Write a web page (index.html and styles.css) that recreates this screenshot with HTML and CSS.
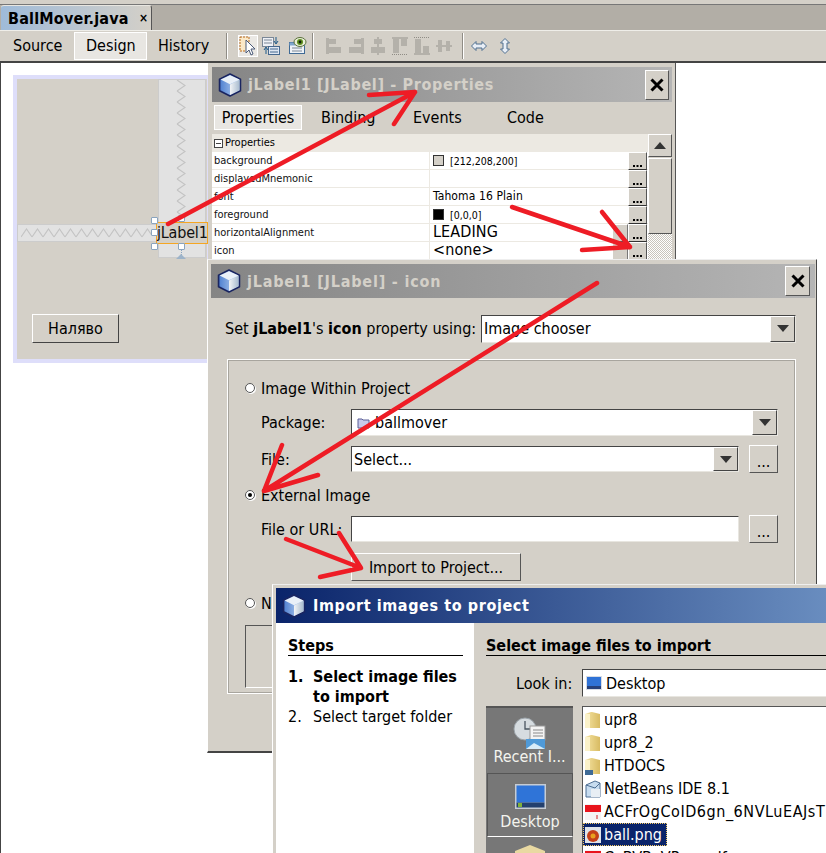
FILE: index.html
```html
<!DOCTYPE html>
<html lang="en">
<head>
<meta charset="utf-8">
<title>BallMover.java</title>
<link rel="stylesheet" href="styles.css">
</head>
<body>
<svg class="defs" width="0" height="0" aria-hidden="true">
  <defs>
    <linearGradient id="cubeL" x1="0" y1="0" x2="1" y2="0"><stop offset="0" stop-color="#4d7fd0"/><stop offset="1" stop-color="#c9dcf4"/></linearGradient>
    <linearGradient id="cubeR" x1="0" y1="0" x2="1" y2="0"><stop offset="0" stop-color="#f2f4f6"/><stop offset="1" stop-color="#a9bccf"/></linearGradient>
    <linearGradient id="fold" x1="0" y1="0" x2="1" y2="0"><stop offset="0" stop-color="#f6e4a4"/><stop offset="1" stop-color="#d8bb62"/></linearGradient>
    <pattern id="zigV" width="10" height="11" patternUnits="userSpaceOnUse"><path d="M1 0 9 5.500 1 11" fill="none" stroke="#c4c4c4" stroke-width="1.200"/></pattern>
    <pattern id="zigH" width="11" height="10" patternUnits="userSpaceOnUse"><path d="M0 9 5.500 1 11 9" fill="none" stroke="#c4c4c4" stroke-width="1.200"/></pattern>
    <symbol id="cube" viewBox="1 .5 22 23">
      <path d="M12 1.500 22 6.500V17.500L12 22.500 2 17.500V6.500Z" fill="url(#cubeL)" stroke="#1a2560" stroke-width="1.600" stroke-linejoin="round"/>
      <path d="M12 11.500 21 7V17L12 21.500Z" fill="url(#cubeR)"/>
      <path d="M12 2.600 21 6.800 12 11.300 3 6.800Z" fill="#e9f0f8"/>
    </symbol>
    <symbol id="folder" viewBox="0 0 16 18">
      <path d="M0 3 6 1h1l8 2v14H0Z" fill="url(#fold)"/>
      <path d="M0 3h5v14H0Z" fill="#fbf2c9"/>
    </symbol>
    <symbol id="more" viewBox="0 0 9 2">
      <path d="M0 0h2v2H0zM3.500 0h2v2h-2zM7 0h2v2H7z" fill="#000"/>
    </symbol>
    <symbol id="caret" viewBox="0 0 12 7">
      <path d="M0 0h12L6 7Z" fill="#333"/>
    </symbol>
    <symbol id="caretUp" viewBox="0 0 12 7">
      <path d="M0 7h12L6 0Z" fill="#333"/>
    </symbol>
    <symbol id="closeX" viewBox="0 0 14 14">
      <path d="M1.500 1.500 12.500 12.500M12.500 1.500 1.500 12.500" fill="none" stroke="#000" stroke-width="3"/>
    </symbol>
  </defs>
</svg>

<main class="ide">
  <div class="top-strip"></div>
  <div class="tabbar">
    <div class="file-tab"><span class="file-name">BallMover.java</span><span class="file-close">×</span></div>
  </div>
  <div class="toolbar">
    <span class="view-tab view-tab-first">Source</span>
    <span class="view-tab view-tab-on">Design</span>
    <span class="view-tab">History</span>
    <span class="tool-sep sep-a"></span>
    <span class="tool tool-on">
      <svg width="18" height="20" viewBox="0 0 18 20"><rect x="1" y="1" width="9" height="14" fill="#fbe9c8" stroke="#b86a1c" stroke-dasharray="2 1"/><path d="M7 4v13l3-3 2 5 2-1-2-5h4Z" fill="#fff" stroke="#4a5a78"/></svg>
    </span>
    <span class="tool">
      <svg width="18" height="20" viewBox="0 0 18 20"><rect x="0.500" y="1.500" width="11" height="9" fill="#eef1f6" stroke="#7a8796"/><path d="M2 4h8M2 7h8" stroke="#7a8796"/><rect x="6.500" y="10.500" width="11" height="8" fill="#dfe7f2" stroke="#45688e"/><path d="M8 13h8M8 16h8" stroke="#45688e"/><path d="M14 1v6M12 5l2 3 2-3" stroke="#1f5a8a" fill="none"/><path d="M4 12v6M2 14l2-3 2 3" stroke="#1f5a8a" fill="none"/></svg>
    </span>
    <span class="tool tool-eye">
      <svg width="18" height="20" viewBox="0 0 18 20"><rect x="0.500" y="6.500" width="15" height="11" fill="#eef2f7" stroke="#3f6a95"/><path d="M0.500 6.500h15v3H.5z" fill="#7fa6cc"/><path d="M3 12h10M3 15h10" stroke="#7a8796"/><ellipse cx="11" cy="6" rx="6" ry="4.500" fill="#e9efd8" stroke="#59703a"/><circle cx="11" cy="6" r="3" fill="#5e8f1e"/><circle cx="11" cy="6" r="1.400" fill="#12200a"/></svg>
    </span>
    <span class="tool-sep sep-b"></span>
    <svg class="align" width="16" height="20" viewBox="0 0 16 20"><path d="M0 2h3v16H0zM3 3h7v5H3zM3 11h12v6H3z" fill="#b4b1aa"/></svg>
    <svg class="align" width="16" height="20" viewBox="0 0 16 20"><path d="M13 2h3v16h-3zM6 3h7v5H6zM1 11h12v6H1z" fill="#b4b1aa"/></svg>
    <svg class="align" width="16" height="20" viewBox="0 0 16 20"><path d="M7 1h2v18H7zM4 3h8v5H4zM1 11h14v6H1z" fill="#b4b1aa"/></svg>
    <svg class="align" width="16" height="20" viewBox="0 0 16 20"><path d="M0 1h16v2H0zM1 3h6v14H1zM9 3h6v7H9z" fill="#b4b1aa"/><path d="M0 18.500h16" stroke="#8f8c85" stroke-dasharray="1 1"/></svg>
    <svg class="align" width="16" height="20" viewBox="0 0 16 20"><path d="M0 17h16v2H0zM1 3h6v14H1zM9 10h6v7H9z" fill="#b4b1aa"/><path d="M0 1.500h16" stroke="#8f8c85" stroke-dasharray="1 1"/></svg>
    <svg class="align" width="16" height="20" viewBox="0 0 16 20"><path d="M0 9h16v2H0zM2 4h4v12H2zM10 5h4v10h-4z" fill="#b4b1aa"/></svg>
    <span class="tool-sep sep-c"></span>
    <svg class="resize" width="16" height="12" viewBox="0 0 16 12"><path d="M.5 6 5 1.500V4h6V1.500L15.500 6 11 10.500V8H5v2.500Z" fill="#e8eef6" stroke="#4f6f8f"/></svg>
    <svg class="resize resize-v" width="12" height="16" viewBox="0 0 12 16"><path d="M6 .5 10.500 5H8v6h2.500L6 15.500 1.500 11H4V5H1.500Z" fill="#e8eef6" stroke="#4f6f8f"/></svg>
  </div>

  <div class="canvas">
    <div class="form">
      <div class="gap gap-v"><svg class="zig-v" width="10" height="139"><rect width="10" height="139" fill="url(#zigV)"/></svg></div>
      <div class="gap gap-h"><svg class="zig-h" width="130" height="10"><rect width="130" height="10" fill="url(#zigH)"/></svg></div>
      <div class="jlabel">jLabel1</div>
      <span class="handle h1"></span><span class="handle h2"></span><span class="handle h3"></span><span class="handle h4"></span><span class="handle h5"></span>
      <span class="anchor-line"></span>
      <span class="anchor"></span>
      <button class="ru-btn">Наляво</button>
    </div>
  </div>
</main>

<section class="win win-props">
  <header class="title title-grey">
    <svg class="cube" width="24" height="24"><use href="#cube"/></svg>
    <span class="title-text">jLabel1 [JLabel] - Properties</span>
    <span class="close"><svg width="14" height="14"><use href="#closeX"/></svg></span>
  </header>
  <nav class="prop-tabs">
    <span class="prop-tab prop-tab-on">Properties</span>
    <span class="prop-tab tab-b">Binding</span>
    <span class="prop-tab tab-e">Events</span>
    <span class="prop-tab tab-c">Code</span>
  </nav>
  <div class="prop-body">
    <div class="sheet">
      <div class="sheet-head"><span class="minus"></span>Properties</div>
      <div class="row"><span class="key">background</span><span class="val"><i class="swatch swatch-g"></i>[212,208,200]</span><span class="dots"><svg width="9" height="2"><use href="#more"/></svg></span></div>
      <div class="row"><span class="key">displayedMnemonic</span><span class="val"></span><span class="dots"><svg width="9" height="2"><use href="#more"/></svg></span></div>
      <div class="row"><span class="key">font</span><span class="val val-m">Tahoma 16 Plain</span><span class="dots"><svg width="9" height="2"><use href="#more"/></svg></span></div>
      <div class="row"><span class="key">foreground</span><span class="val"><i class="swatch swatch-k"></i>[0,0,0]</span><span class="dots"><svg width="9" height="2"><use href="#more"/></svg></span></div>
      <div class="row"><span class="key">horizontalAlignment</span><span class="val val-l">LEADING</span><span class="mini"></span><span class="dots"><svg width="9" height="2"><use href="#more"/></svg></span></div>
      <div class="row"><span class="key">icon</span><span class="val val-l">&lt;none&gt;</span><span class="mini"></span><span class="dots"><svg width="9" height="2"><use href="#more"/></svg></span></div>
    </div>
    <div class="vscroll">
      <span class="v-up"><svg width="12" height="7"><use href="#caretUp"/></svg></span>
      <span class="v-thumb"></span>
      <span class="v-track"></span>
    </div>
  </div>
</section>

<section class="win win-icon">
  <header class="title title-grey title-icon">
    <svg class="cube" width="24" height="24"><use href="#cube"/></svg>
    <span class="title-text">jLabel1 [JLabel] - icon</span>
    <span class="close"><svg width="14" height="14"><use href="#closeX"/></svg></span>
  </header>
  <div class="using">
    <span class="using-label">Set <b>jLabel1</b>'s <b>icon</b> property using:</span>
    <div class="combo using-combo"><span class="combo-text">Image chooser</span><span class="combo-btn"><svg width="12" height="7"><use href="#caret"/></svg></span></div>
  </div>
  <div class="group">
    <label class="radio-row r-first"><i class="radio"></i>Image Within Project</label>
    <div class="field f-package">
      <span class="field-label">Package:</span>
      <div class="combo combo-wide"><span class="combo-text combo-pkg"><svg class="pkg" width="13" height="13" viewBox="0 0 13 13"><path d="M1 3h4l1 1h6v8H1Z" fill="#c7c9ea" stroke="#5a5f96"/></svg>ballmover</span><span class="combo-btn"><svg width="12" height="7"><use href="#caret"/></svg></span></div>
    </div>
    <div class="field f-file">
      <span class="field-label">File:</span>
      <div class="combo combo-mid"><span class="combo-text">Select...</span><span class="combo-btn"><svg width="12" height="7"><use href="#caret"/></svg></span></div>
      <button class="small-btn">...</button>
    </div>
    <label class="radio-row r-ext"><i class="radio radio-on"></i>External Image</label>
    <div class="field f-url">
      <span class="field-label">File or URL:</span>
      <div class="combo combo-mid"></div>
      <button class="small-btn">...</button>
    </div>
    <button class="import-btn">Import to Project...</button>
    <label class="radio-row r-none"><i class="radio"></i>No Image</label>
    <div class="preview"></div>
  </div>
</section>

<section class="win win-wizard">
  <header class="title title-blue">
    <svg class="cube" width="24" height="24"><use href="#cube"/></svg>
    <span class="title-text">Import images to project</span>
  </header>
  <div class="wiz-body">
    <aside class="steps">
      <h2 class="steps-head">Steps</h2>
      <ol class="steps-list">
        <li class="step step-on"><span class="num">1.</span><span>Select image files to import</span></li>
        <li class="step"><span class="num">2.</span><span>Select target folder</span></li>
      </ol>
    </aside>
    <div class="wiz-main">
      <h2 class="wiz-head">Select image files to import</h2>
      <div class="look">
        <span class="look-label">Look in:</span>
        <div class="look-box">
          <svg width="16" height="14" viewBox="0 0 16 14"><rect width="16" height="14" fill="#d8dce4"/><rect x="1" y="1" width="14" height="9" fill="#2f72d6"/><rect x="1" y="10" width="14" height="3" fill="#26407a"/></svg>
          Desktop
        </div>
      </div>
      <div class="chooser">
        <div class="places">
          <div class="place place-recent">
            <svg width="34" height="32" viewBox="0 0 34 32"><circle cx="12" cy="12" r="11" fill="#d6dce0" stroke="#9aa2a8"/><path d="M12 4v8h7" stroke="#4a5560" stroke-width="1.300" fill="none"/><rect x="17" y="9" width="15" height="14" fill="#f4f4f4" stroke="#999"/><path d="M20 13h10M20 16h10M20 19h10" stroke="#8a8a8a"/><rect x="13" y="22" width="19" height="10" fill="#4f9ad8"/><path d="M13 32l8-6 11 6Z" fill="#d8ecf8"/></svg>
            <span class="place-name">Recent I...</span>
          </div>
          <div class="place place-on">
            <svg width="31" height="25" viewBox="0 0 31 25"><rect width="31" height="25" fill="#c6ccd4"/><rect x="1.500" y="1.500" width="28" height="17" fill="#2f74d8"/><rect x="1.500" y="18.500" width="28" height="5" fill="#23406e"/><rect x="3" y="19" width="4" height="4" fill="#7fb03a"/></svg>
            <span class="place-name">Desktop</span>
          </div>
          <div class="place place-next">
            <svg width="30" height="20" viewBox="0 0 30 20"><path d="M0 6 15 0l15 6v14H0Z" fill="#e9d9a2"/></svg>
          </div>
        </div>
        <ul class="files">
          <li class="file"><svg class="ficon" width="16" height="18"><use href="#folder"/></svg>upr8</li>
          <li class="file"><svg class="ficon" width="16" height="18"><use href="#folder"/></svg>upr8_2</li>
          <li class="file"><svg class="ficon" width="16" height="18" viewBox="0 0 16 18"><use href="#folder" width="16" height="18"/><rect y="13" width="8" height="5" fill="#3f6a95"/></svg>HTDOCS</li>
          <li class="file"><svg class="ficon" width="16" height="18" viewBox="0 0 16 18"><path d="M1 5 10 1l5 2v14H1Z" fill="#c7dcef" stroke="#4f6f93"/><path d="M1 5l9 3 5-5" fill="none" stroke="#4f6f93"/><path d="M6 9h9v8H6Z" fill="#e8eef4"/></svg>NetBeans IDE 8.1</li>
          <li class="file file-long"><svg class="ficon" width="16" height="18" viewBox="0 0 16 18"><rect y="1" width="16" height="16" fill="#f4f4f4"/><rect y="2" width="16" height="7" fill="#e8141c"/><path d="M12 12v4" stroke="#d02020"/></svg>ACFrOgCoID6gn_6NVLuEAJsT</li>
          <li class="file file-on"><svg class="ficon" width="16" height="16" viewBox="0 0 16 16"><rect width="16" height="16" fill="#dfe4ea"/><circle cx="8" cy="9" r="6" fill="#c4401a"/><circle cx="8" cy="9" r="2.500" fill="#e8a020"/></svg><span>ball.png</span></li>
          <li class="file"><svg class="ficon" width="16" height="18" viewBox="0 0 16 18"><rect y="1" width="16" height="16" fill="#f4f4f4"/><rect y="2" width="16" height="7" fill="#e8141c"/></svg>CoBVBeVPpw.pdf</li>
        </ul>
      </div>
    </div>
  </div>
</section>

<svg class="marks" width="826" height="853" viewBox="0 0 826 853" aria-hidden="true">
  <path d="M168 224 415 92M369 95 415 92 394 124"/>
  <path d="M512 207 630 247M602 212 630 247M582 250 630 247"/>
  <path d="M597 283 264 491M282 445 264 491 318 475"/>
  <path d="M286 539 361 568M339 533 361 568 320 577"/>
</svg>
</body>
</html>
```

FILE: styles.css
```css
html, body { margin: 0; padding: 0; }
body {
  width: 826px;
  height: 853px;
  overflow: hidden;
  position: relative;
  background: #fff;
  font-family: "DejaVu Sans", "Liberation Sans", sans-serif;
  font-stretch: condensed;
  font-size: 16px;
  color: #000;
}
.defs { position: absolute; }
button { font: inherit; color: inherit; padding: 0; }

.ide { display: flex; flex-direction: column; height: 853px; }
.top-strip { height: 4px; background: #d4d0c8; border-bottom: 1px solid #777; }
.tabbar { height: 25px; background: #b2aea6; border-bottom: 1px solid #efeee9; padding-left: 1px; }
.file-tab {
  width: 151px; height: 25px; box-sizing: border-box;
  display: flex; align-items: center; justify-content: space-between;
  padding: 0 3px 0 7px;
  background: linear-gradient(90deg, #9fbbd9, #d4d0c8);
  border-top: 1px solid #e8e6e0;
  border-right: 1px solid #555;
  border-radius: 3px 3px 0 0;
}
.file-name { font-weight: 700; font-size: 16px; letter-spacing: .2px; }
.file-close { font-size: 12px; font-weight: 700; }

.toolbar {
  height: 30px; flex: none;
  display: flex; align-items: center;
  background: #d4d0c8;
  border-bottom: 2px solid #444;
  padding-left: 1px;
}
.view-tab { height: 28px; line-height: 28px; padding: 0 11px; box-sizing: border-box; width: 73px; }
.view-tab-first { padding-left: 12px; }
.view-tab-on { background: #e8e6e2; border: 1px solid #fff; line-height: 26px; }
.tool-sep { width: 1px; height: 26px; background: #8f8c85; border-right: 1px solid #fff; }
.sep-a { margin: 0 10px 0 6px; }
.sep-b { margin: 0 12px 0 4px; }
.sep-c { margin: 0 6px 0 4px; }
.tool { display: flex; align-items: center; justify-content: center; width: 20px; height: 22px; }
.tool-on { background: #eae8e4; border: 1px solid #fff; box-sizing: border-box; margin-right: 3px; }
.tool-eye { margin-left: 7px; }
.align { margin-right: 6px; flex: none; }
.resize { margin-left: 1px; }
.resize-v { margin-left: 12px; }

.canvas { flex: 1; background: #fff; border-left: 1px solid #444; padding: 12px 0 0 12px; }
.form {
  position: relative;
  width: 190px; height: 280px;
  background: #d4d0c8;
  border: 4px solid #dedefa;
  border-right-width: 12px;
}
.gap { position: absolute; background: #e2e2e2; box-sizing: border-box; border: 1px solid #ccc; }
.gap-v { left: 141px; top: 0; width: 48px; height: 179px; display: flex; justify-content: center; padding-right: 2px; }
.gap-h { left: 0; top: 145px; width: 141px; height: 18px; display: flex; align-items: center; padding-left: 3px; }
.zig-v, .zig-h { display: block; flex: none; }
.jlabel {
  position: absolute; left: 139px; top: 143px; width: 52px; height: 22px; box-sizing: border-box;
  border: 1px solid #f5a623; line-height: 20px; color: #111; white-space: nowrap;
  font-size: 16px; letter-spacing: -.2px; background: #d4d0c8;
}
.handle { position: absolute; width: 5px; height: 5px; background: #fff; border: 1px solid #8aa4bf; border-radius: 1px; }
.h1 { left: 134px; top: 138px; }
.h2 { left: 134px; top: 150px; }
.h3 { left: 134px; top: 164px; }
.h4 { left: 161px; top: 136px; }
.h5 { left: 161px; top: 164px; }
.anchor-line { position: absolute; left: 164px; top: 171px; height: 5px; border-left: 1px dotted #8aa4bf; }
.anchor { position: absolute; left: 159px; top: 175px; width: 0; height: 0; border: 5px solid transparent; border-bottom-color: #9db3c9; border-top: 0; }
.ru-btn {
  position: absolute; left: 15px; top: 235px; width: 87px; height: 29px;
  background: #d4d0c8; border: 1px solid; border-color: #fff #444 #444 #fff; font-size: 16px;
}

.win { position: absolute; box-sizing: border-box; background: #d4d0c8; display: flex; flex-direction: column; }
.win-props { left: 208px; top: 63px; width: 468px; height: 200px; padding: 4px 3px 0 4px; border-right: 1px solid #555; }
.win-icon { left: 207px; top: 259px; width: 610px; height: 494px; padding: 4px 1px 0 3px; border-left: 1px solid #fff; border-right: 1px solid #444; border-bottom: 2px solid #444; border-top: 1px solid #eee; }
.win-wizard { left: 272px; top: 584px; width: 560px; height: 280px; padding: 3px 0 0 3px; border-left: 1px solid #fff; border-top: 1px solid #eee; }

.title { display: flex; align-items: center; font-weight: 700; flex: none; }
.title-grey { height: 35px; background: linear-gradient(90deg, #858585, #b5b5b5); color: #d4d0c8; padding-left: 6px; }
.title-icon { height: 34px; }
.title-blue { height: 35px; background: linear-gradient(90deg, #0a246a, #6a8ec0); color: #fff; padding-left: 6px; }
.cube { flex: none; margin-right: 6px; }
.title-grey .title-text { letter-spacing: .65px; }
.title-icon .title-text { letter-spacing: .8px; }
.title-text { flex: 1; white-space: nowrap; letter-spacing: .6px; }
.title-blue .cube { margin-right: 7px; }
.close {
  width: 24px; height: 30px; box-sizing: border-box; margin-right: 3px;
  background: #d4d0c8; border: 1px solid; border-color: #fff #555 #555 #fff;
  display: flex; align-items: center; justify-content: center;
}
.title-icon .close { margin-right: 5px; width: 25px; }

.prop-tabs { height: 32px; flex: none; display: flex; align-items: center; padding-left: 2px; box-sizing: border-box; padding-bottom: 1px; }
.prop-tab { position: relative; flex: none; }
.prop-tab-on { width: 88px; height: 25px; box-sizing: border-box; background: #e8e6e2; border: 1px solid #fff; text-align: center; line-height: 23px; }
.tab-b { margin-left: 19px; width: 92px; }
.tab-e { width: 94px; }
.tab-c { width: 60px; }

.prop-body { display: flex; flex: 1; min-height: 0; }
.sheet { width: 436px; flex: none; background: #fff; }
.sheet-head { height: 18px; background: #ece9e2; font-size: 11px; line-height: 18px; display: flex; align-items: center; padding-left: 2px; }
.minus { width: 7px; height: 7px; border: 1px solid #444; margin-right: 2px; background: linear-gradient(#444, #444) center / 5px 1px no-repeat #fff; }
.row { height: 18px; box-sizing: border-box; display: flex; align-items: center; border-bottom: 1px solid #ece9e2; }
.key { width: 218px; flex: none; box-sizing: border-box; padding-left: 2px; font-size: 11px; height: 17px; line-height: 17px; border-right: 1px solid #ece9e2; color: #111; }
.val { flex: 1; padding-left: 3px; font-size: 10.5px; display: flex; align-items: center; white-space: nowrap; }
.val-m { font-size: 12px; letter-spacing: .1px; padding-bottom: 2px; }
.val-l { font-size: 16px; letter-spacing: .1px; padding-bottom: 2px; }
.swatch { width: 9px; height: 9px; border: 1px solid #333; margin-right: 6px; }
.swatch-g { background: #d4d0c8; }
.swatch-k { background: #000; }
.mini { width: 16px; height: 18px; flex: none; background: #d4d0c8; border: 1px solid; border-color: #fff #777 #555 #fff; box-sizing: border-box; }
.dots { width: 19px; height: 18px; box-sizing: border-box; flex: none; margin-right: 1px; background: #d4d0c8; border: 1px solid; border-color: #fff #555 #333 #fff; display: flex; align-items: flex-end; justify-content: center; padding-bottom: 2px; }
.dots svg { display: block; }
.vscroll { width: 24px; flex: none; display: flex; flex-direction: column; }
.v-up { height: 23px; background: #d4d0c8; border: 1px solid; border-color: #fff #555 #555 #fff; box-sizing: border-box; display: flex; align-items: center; justify-content: center; flex: none; }
.v-thumb { height: 76px; background: #d4d0c8; border: 1px solid; border-color: #fff #555 #555 #fff; box-sizing: border-box; flex: none; margin-top: 1px; }
.v-track { flex: 1; background: repeating-conic-gradient(#fff 0 25%, #c8c4bc 0 50%) 0 0 / 2px 2px; }

.using { height: 61px; flex: none; display: flex; align-items: center; padding-left: 14px; padding-right: 20px; }
.using-label { width: 256px; flex: none; white-space: nowrap; }
.combo { box-sizing: border-box; background: #fff; border: 1px solid; border-color: #444 #e8e6e0 #e8e6e0 #444; display: flex; align-items: stretch; flex: none; }
.using-combo { width: 315px; height: 28px; }
.combo-text { flex: 1; display: flex; align-items: center; padding-left: 2px; white-space: nowrap; }
.combo-pkg { padding-left: 5px; }
.pkg { margin-right: 5px; }
.combo-btn { width: 23px; background: #d4d0c8; border: 1px solid; border-color: #fff #444 #444 #fff; display: flex; align-items: center; justify-content: center; flex: none; }
.group { position: relative; margin-left: 16px; width: 569px; height: 335px; box-sizing: border-box; border: 1px solid #fff; outline: 1px solid #a8a59e; outline-offset: -2px; padding-left: 17px; }
.radio-row { display: flex; align-items: center; height: 22px; gap: 6px; white-space: nowrap; }
.radio { width: 8px; height: 8px; border-radius: 50%; background: #fff; border: 1px solid #555; box-shadow: 1px 1px 0 #fff; display: block; position: relative; }
.radio-on::after { content: ""; position: absolute; left: 2px; top: 2px; width: 4px; height: 4px; border-radius: 50%; background: #000; }
.r-first { margin-top: 17px; }
.field { display: flex; align-items: center; padding-left: 16px; white-space: nowrap; }
.field-label { width: 90px; flex: none; }
.f-package { margin-top: 9px; height: 28px; }
.combo-wide { width: 427px; height: 27px; }
.f-file { margin-top: 9px; height: 28px; }
.combo-mid { width: 388px; height: 26px; }
.small-btn { width: 29px; height: 28px; margin-left: 10px; background: #d4d0c8; border: 1px solid; border-color: #fff #555 #555 #fff; padding-top: 4px; }
.r-ext { margin-top: 11px; }
.f-url { margin-top: 9px; height: 28px; }
.import-btn { display: block; margin: 10px 0 0 106px; width: 170px; height: 28px; background: #d4d0c8; border: 1px solid; border-color: #fff #555 #555 #fff; }
.r-none { margin-top: 11px; }
.preview { width: 60px; height: 63px; box-sizing: border-box; margin-top: 11px; border: 1px solid; border-color: #555 #fff #fff #555; }

.wiz-body { flex: 1; display: flex; min-height: 0; background: #d4d0c8; }
.steps { width: 198px; flex: none; background: #fff; box-sizing: border-box; padding: 0 11px 0 12px; }
.steps-head, .wiz-head { margin: 0; font-size: 16px; font-weight: 700; height: 32px; line-height: 46px; border-bottom: 1px solid #000; overflow: hidden; }
.steps-list { list-style: none; margin: 11px 0 0; padding: 0; }
.step { display: flex; line-height: 20px; }
.step-on { font-weight: 700; }
.num { width: 25px; flex: none; }
.wiz-main { flex: 1; padding-left: 12px; }
.wiz-head { white-space: nowrap; }
.look { display: flex; align-items: center; margin-top: 13px; height: 28px; }
.look-label { width: 96px; flex: none; box-sizing: border-box; padding-left: 30px; }
.look-box { flex: 1; height: 28px; box-sizing: border-box; background: #fff; border: 1px solid; border-color: #444 #e8e6e0 #e8e6e0 #444; display: flex; align-items: center; gap: 4px; padding-left: 3px; }
.chooser { display: flex; margin-top: 9px; gap: 9px; }
.places { width: 87px; flex: none; background: #777; border-top: 2px solid #555; height: 160px; color: #f4f4ee; }
.place { display: flex; flex-direction: column; align-items: center; text-align: center; }
.place-name { line-height: 16px; }
.place-recent { height: 65px; padding-top: 9px; box-sizing: border-box; }
.place-on { height: 64px; box-sizing: border-box; padding-top: 10px; border: 1px solid; border-color: #555 #555 #fff #555; margin-left: 1px; gap: 5px; }
.place-next { padding-top: 8px; }
.files { list-style: none; margin: 0; padding: 1px 0 0; flex: 1; background: #fff; border: 1px solid; border-color: #555 #fff #fff #555; min-width: 0; height: 160px; white-space: nowrap; overflow: hidden; }
.file { height: 23px; display: flex; align-items: center; padding-left: 2px; }
.file-long { letter-spacing: .55px; }
.ficon { flex: none; margin-right: 3px; }
.file-on { width: 84px; box-sizing: border-box; background: #0a246a; color: #fff; outline: 1px dotted #f4c860; outline-offset: -1px; }
.file-on .ficon { background: #fff; }

.marks { position: absolute; left: 0; top: 0; pointer-events: none; }
.marks path { fill: none; stroke: #ee1c25; stroke-width: 4.500; stroke-linecap: round; stroke-linejoin: round; }
```
